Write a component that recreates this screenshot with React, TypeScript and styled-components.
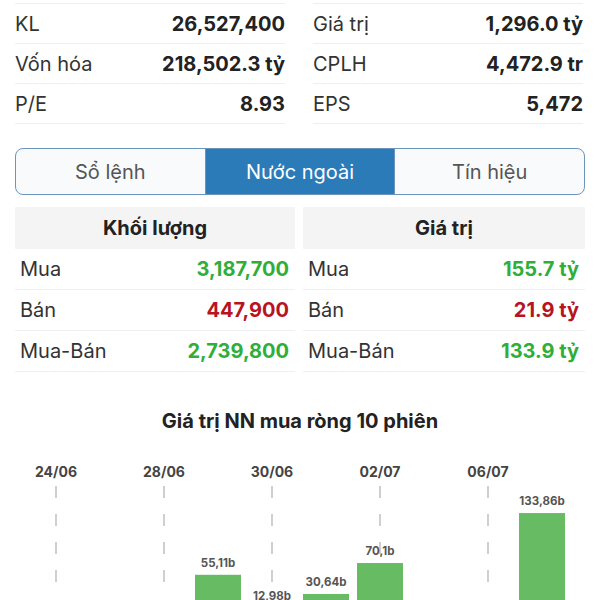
import React from "react";
import styled, { createGlobalStyle } from "styled-components";

//STYLES
const GlobalStyle = createGlobalStyle`
  body {
    margin: 0;
    background: #ffffff;
    font-family: Inter, "Noto Sans", sans-serif;
    color: #222;
    overflow: hidden;
  }
`;

const Page = styled.div`
  width: 600px;
  height: 600px;
  overflow: hidden;
`;

const StatsGrid = styled.div`
  display: grid;
  grid-template-columns: 1fr 1fr;
  column-gap: 28px;
  padding: 0 17px 0 15px;
  margin-top: 3px;
`;

const StatColumn = styled.div`
  border-top: 1px solid #efefef;
`;

const StatRow = styled.div`
  height: 39px;
  display: flex;
  align-items: center;
  justify-content: space-between;
  border-bottom: 1px solid #efefef;
  font-size: 20px;
`;

const StatLabel = styled.span`
  color: #333;
`;

const StatValue = styled.span`
  font-weight: 700;
  color: #222;
`;

const Tabs = styled.div`
  display: flex;
  height: 45px;
  margin: 24px 15px 0 15px;
  border: 1.5px solid #6b95bc;
  border-radius: 8px;
  overflow: hidden;
  background: #f9fafb;
`;

const Tab = styled.div<{ $active?: boolean }>`
  flex: 1;
  display: flex;
  align-items: center;
  justify-content: center;
  font-size: 20px;
  color: ${(p) => (p.$active ? "#ffffff" : "#555")};
  background: ${(p) => (p.$active ? "#2b7bb9" : "transparent")};
  & + & {
    border-left: 1.5px solid #6b95bc;
  }
`;

const TablesGrid = styled.div`
  display: grid;
  grid-template-columns: 280px 282px;
  column-gap: 8px;
  padding: 0 15px;
  margin-top: 12px;
`;

const FlowTable = styled.div``;

const TableHeader = styled.div`
  height: 42px;
  display: flex;
  align-items: center;
  justify-content: center;
  background: #f4f4f4;
  font-size: 20px;
  font-weight: 700;
  color: #222;
`;

const FlowRow = styled.div`
  height: 40px;
  display: flex;
  align-items: center;
  justify-content: space-between;
  padding: 0 6px 0 5px;
  border-bottom: 1px solid #f0f0f0;
  font-size: 20px;
`;

const FlowLabel = styled.span`
  color: #333;
`;

const FlowValue = styled.span<{ $tone: "up" | "down" }>`
  font-weight: 700;
  color: ${(p) => (p.$tone === "up" ? "#2fae3a" : "#b8141f")};
`;

const ChartTitle = styled.div`
  margin-top: 37px;
  line-height: 24px;
  text-align: center;
  font-size: 20px;
  font-weight: 700;
  color: #222;
`;

const ChartSvg = styled.svg`
  display: block;
  margin-top: 21px;
`;

//DATA
const stats = [
  [
    ["KL", "26,527,400"],
    ["Vốn hóa", "218,502.3 tỷ"],
    ["P/E", "8.93"],
  ],
  [
    ["Giá trị", "1,296.0 tỷ"],
    ["CPLH", "4,472.9 tr"],
    ["EPS", "5,472"],
  ],
];

const tables = [
  {
    title: "Khối lượng",
    rows: [
      ["Mua", "3,187,700", "up"],
      ["Bán", "447,900", "down"],
      ["Mua-Bán", "2,739,800", "up"],
    ],
  },
  {
    title: "Giá trị",
    rows: [
      ["Mua", "155.7 tỷ", "up"],
      ["Bán", "21.9 tỷ", "down"],
      ["Mua-Bán", "133.9 tỷ", "up"],
    ],
  },
];

// only sessions with a net buy reach into the visible part of the chart
const sessions: { date: string; value: number | null }[] = [
  { date: "24/06", value: null },
  { date: "25/06", value: null },
  { date: "28/06", value: null },
  { date: "29/06", value: 55.11 },
  { date: "30/06", value: 12.98 },
  { date: "01/07", value: 30.64 },
  { date: "02/07", value: 70.1 },
  { date: "05/07", value: null },
  { date: "06/07", value: null },
  { date: "07/07", value: 133.86 },
];

const fmt = (v: number) => `${v}`.replace(".", ",") + "b";

function Chart() {
  const baseline = 164;
  const scale = 0.784;
  const barW = 46;
  return (
    <ChartSvg width={600} height={200}>
      {sessions.map((s, i) => {
        const x = 56 + i * 54;
        if (i % 2 !== 0) return null;
        return (
          <g key={"d" + i}>
            <text
              x={x}
              y={23}
              textAnchor="middle"
              fontSize={14}
              fontWeight={700}
              fill="#444"
              fontFamily="Inter, sans-serif"
            >
              {s.date}
            </text>
            <line
              x1={x}
              x2={x}
              y1={32}
              y2={135}
              stroke="#c4c4c4"
              strokeWidth={1.6}
              strokeDasharray="12 16"
            />
          </g>
        );
      })}
      {sessions.map((s, i) => {
        if (s.value === null) return null;
        const cx = 56 + i * 54;
        const h = s.value * scale;
        const y = baseline - h;
        return (
          <g key={"b" + i}>
            <rect x={cx - barW / 2} y={y} width={barW} height={h} fill="#67bb62" />
            <text
              x={cx}
              y={y - 8}
              textAnchor="middle"
              fontSize={11.5}
              fontWeight={700}
              fill="#555"
              fontFamily="Inter, sans-serif"
            >
              {fmt(s.value)}
            </text>
          </g>
        );
      })}
    </ChartSvg>
  );
}

export default function App() {
  return (
    <Page>
      <GlobalStyle />
      <StatsGrid>
        {stats.map((col, ci) => (
          <StatColumn key={ci}>
            {col.map(([label, value]) => (
              <StatRow key={label}>
                <StatLabel>{label}</StatLabel>
                <StatValue>{value}</StatValue>
              </StatRow>
            ))}
          </StatColumn>
        ))}
      </StatsGrid>

      <Tabs>
        <Tab>Sổ lệnh</Tab>
        <Tab $active>Nước ngoài</Tab>
        <Tab>Tín hiệu</Tab>
      </Tabs>

      <TablesGrid>
        {tables.map((t) => (
          <FlowTable key={t.title}>
            <TableHeader>{t.title}</TableHeader>
            {t.rows.map(([label, value, tone]) => (
              <FlowRow key={label}>
                <FlowLabel>{label}</FlowLabel>
                <FlowValue $tone={tone as "up" | "down"}>{value}</FlowValue>
              </FlowRow>
            ))}
          </FlowTable>
        ))}
      </TablesGrid>

      <ChartTitle>Giá trị NN mua ròng 10 phiên</ChartTitle>
      <Chart />
    </Page>
  );
}
